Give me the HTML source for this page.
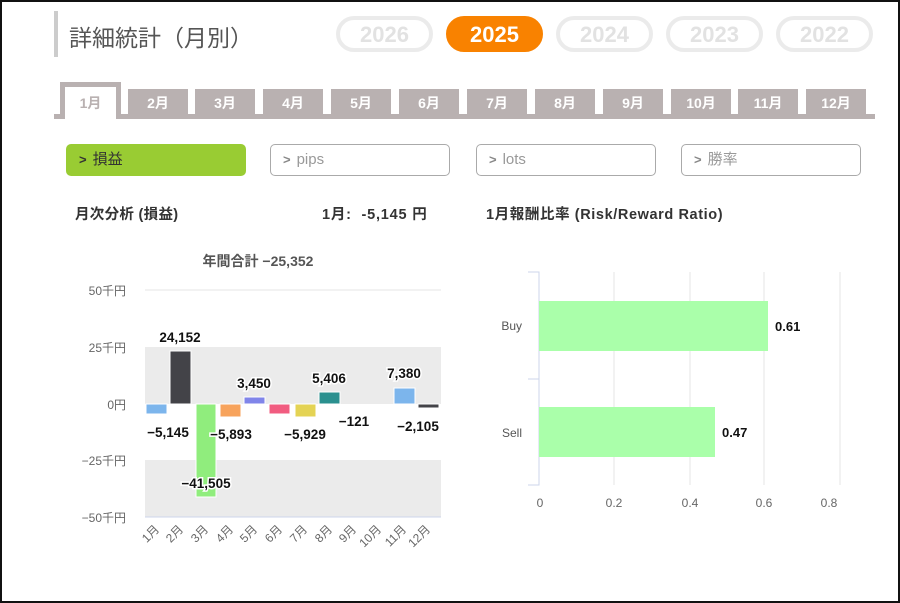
<!DOCTYPE html>
<html><head><meta charset="utf-8"><style>
*{margin:0;padding:0;box-sizing:border-box}
body{width:900px;height:603px;background:#fff;font-family:"Liberation Sans","Noto Sans CJK JP",sans-serif;position:relative;overflow:hidden}
.frame{position:absolute;left:0;top:0;width:900px;height:603px;border:2px solid #111;border-right-width:2px}
.abs{position:absolute}
.pill{position:absolute;top:16px;width:97px;height:36px;border:4px solid #ebebeb;border-radius:18px;color:#e2e2e2;font-weight:bold;font-size:22px;text-align:center;line-height:30px}
.tab{position:absolute;top:89px;width:60px;height:26px;background:#b9b1b1;color:#fff;font-weight:bold;font-size:14px;text-align:center;line-height:28px}
.btn{position:absolute;top:144px;width:180px;height:32px;border:1.5px solid #aaa;border-radius:5px;color:#999;font-size:15px;line-height:29px;padding-left:12px}
.btn b{color:#888;font-size:13px;margin-right:6px}
.h{position:absolute;top:203px;font-size:14.5px;font-weight:bold;color:#333;letter-spacing:0.3px}
</style></head><body>
<div class="frame"></div>
<div class="abs" style="left:54px;top:11px;width:4px;height:46px;background:#ccc"></div>
<div class="abs" style="left:69px;top:19px;font-size:23px;color:#555">詳細統計（月別）</div>
<div class="pill" style="left:336px">2026</div>
<div class="pill" style="left:446px;background:#f98200;border-color:#f98200;color:#fff">2025</div>
<div class="pill" style="left:556px">2024</div>
<div class="pill" style="left:666px">2023</div>
<div class="pill" style="left:776px">2022</div>

<div class="abs" style="left:54px;top:114px;width:821px;height:5px;background:#b9b1b1"></div>
<div class="abs" style="left:60px;top:82px;width:61px;height:37px;background:#b9b1b1"></div>
<div class="abs" style="left:65px;top:87px;width:51px;height:32px;background:#fff;color:#b9b1b1;font-weight:bold;font-size:14px;text-align:center;line-height:32px">1月</div>
<div class="tab" style="left:128px">2月</div>
<div class="tab" style="left:195px">3月</div>
<div class="tab" style="left:263px">4月</div>
<div class="tab" style="left:331px">5月</div>
<div class="tab" style="left:399px">6月</div>
<div class="tab" style="left:467px">7月</div>
<div class="tab" style="left:535px">8月</div>
<div class="tab" style="left:603px">9月</div>
<div class="tab" style="left:671px">10月</div>
<div class="tab" style="left:738px">11月</div>
<div class="tab" style="left:806px">12月</div>

<div class="btn" style="left:66px;background:#99cc33;border-color:#99cc33;color:#333"><b style="color:#333">&gt;</b>損益</div>
<div class="btn" style="left:270px"><b>&gt;</b>pips</div>
<div class="btn" style="left:476px"><b>&gt;</b>lots</div>
<div class="btn" style="left:681px"><b>&gt;</b>勝率</div>

<div class="h" style="left:75px">月次分析 (損益)</div>
<div class="h" style="left:322px;letter-spacing:0.8px">1月:&nbsp; -5,145 円</div>
<div class="h" style="left:486px;letter-spacing:0.6px">1月報酬比率 (Risk/Reward Ratio)</div>

<svg class="abs" style="left:0;top:0" width="900" height="603" font-family="Liberation Sans, Noto Sans CJK JP, sans-serif">
<text x="258" y="266" font-size="14" font-weight="bold" fill="#555" text-anchor="middle">年間合計 −25,352</text>
<rect x="145" y="347" width="296" height="57" fill="#ebebeb"/>
<rect x="145" y="460" width="296" height="57" fill="#ebebeb"/>
<line x1="145" y1="290" x2="441" y2="290" stroke="#e6e6e6"/>
<line x1="145" y1="517" x2="441" y2="517" stroke="#ccd6eb"/>
<g font-size="12" fill="#666" text-anchor="end">
<text x="126" y="295">50千円</text><text x="126" y="352">25千円</text><text x="126" y="409">0円</text><text x="126" y="465">−25千円</text><text x="126" y="522">−50千円</text>
</g>
<g stroke="#fff" stroke-width="1">
<rect x="146" y="404" width="21" height="10" fill="#7cb5ec"/>
<rect x="170" y="351" width="21" height="53" fill="#434348"/>
<rect x="196" y="404" width="20" height="93" fill="#90ed7d"/>
<rect x="220" y="404" width="21" height="13" fill="#f7a35c"/>
<rect x="244" y="397" width="21" height="7" fill="#8085e9"/>
<rect x="269" y="404" width="21" height="10" fill="#f15c80"/>
<rect x="295" y="404" width="21" height="13" fill="#e4d354"/>
<rect x="319" y="392" width="21" height="12" fill="#2b908f"/>
<rect x="394" y="388" width="21" height="16" fill="#7cb5ec"/>
<rect x="418" y="404" width="21" height="4" fill="#434348"/>
</g>
<g font-size="13.5" font-weight="bold" fill="#111" text-anchor="middle" stroke="#fff" stroke-width="3" paint-order="stroke">
<text x="168" y="437">−5,145</text><text x="180" y="342">24,152</text><text x="206" y="488">−41,505</text>
<text x="231" y="439">−5,893</text><text x="254" y="388">3,450</text><text x="305" y="439">−5,929</text>
<text x="329" y="383">5,406</text><text x="354" y="426">−121</text><text x="404" y="378">7,380</text><text x="418" y="431">−2,105</text>
</g>
<g font-size="12" fill="#666" text-anchor="end">
<text transform="translate(160,530) rotate(-45)">1月</text><text transform="translate(184,530) rotate(-45)">2月</text><text transform="translate(209,530) rotate(-45)">3月</text><text transform="translate(234,530) rotate(-45)">4月</text><text transform="translate(258,530) rotate(-45)">5月</text><text transform="translate(283,530) rotate(-45)">6月</text><text transform="translate(308,530) rotate(-45)">7月</text><text transform="translate(333,530) rotate(-45)">8月</text><text transform="translate(357,530) rotate(-45)">9月</text><text transform="translate(382,530) rotate(-45)">10月</text><text transform="translate(407,530) rotate(-45)">11月</text><text transform="translate(431,530) rotate(-45)">12月</text>
</g>

<g stroke="#e6e6e6" stroke-width="1">
<line x1="614" y1="272" x2="614" y2="485"/><line x1="690" y1="272" x2="690" y2="485"/><line x1="764" y1="272" x2="764" y2="485"/><line x1="840" y1="272" x2="840" y2="485"/>
</g>
<path d="M528 272H539V485H528M528 379H539" fill="none" stroke="#ccd6eb"/>
<rect x="539" y="301" width="229" height="50" fill="#aaffaa"/>
<rect x="539" y="407" width="176" height="50" fill="#aaffaa"/>
<g font-size="12" fill="#555" text-anchor="end"><text x="522" y="330">Buy</text><text x="522" y="437">Sell</text></g>
<g font-size="13" font-weight="bold" fill="#111"><text x="775" y="331">0.61</text><text x="722" y="437">0.47</text></g>
<g font-size="12" fill="#666" text-anchor="middle"><text x="540" y="507">0</text><text x="614" y="507">0.2</text><text x="690" y="507">0.4</text><text x="764" y="507">0.6</text><text x="829" y="507">0.8</text></g>
</svg>
</body></html>
